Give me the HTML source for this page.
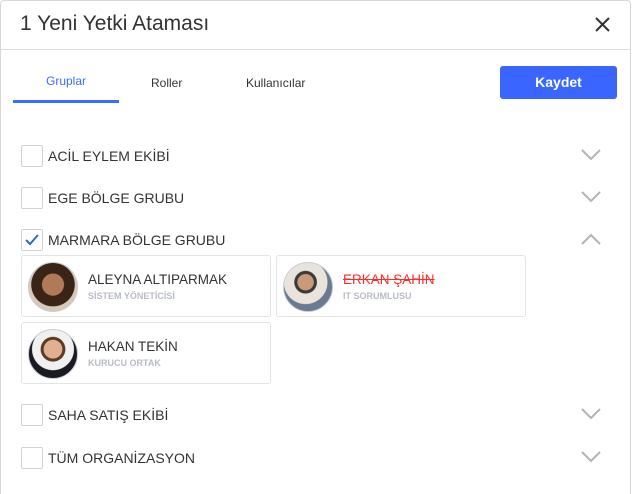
<!DOCTYPE html><html><head><style>
body{margin:0;width:632px;height:493px;background:#fff;font-family:"Liberation Sans",sans-serif;position:relative;overflow:hidden}
.box{position:absolute;left:0;top:0;width:629px;height:493px;border:1px solid #d8d8d8;border-bottom:none;border-radius:4px 4px 0 0}
.a{position:absolute}
.cb{position:absolute;left:21px;width:20px;height:20px;border:1px solid #cfd2d8;border-radius:2px;background:#fff}
.lbl{position:absolute;left:48px;font-size:14px;color:#333}
.chev{position:absolute;left:580px}
.card{position:absolute;width:248px;height:60px;border:1px solid #e2e4e8;border-radius:3px}
.av{position:absolute;left:6px;top:6px;width:48px;height:48px;border-radius:50%;border:1px solid #c8ccd4;overflow:hidden}
.nm{position:absolute;left:66px;top:16px;font-size:13.5px;color:#333}
.rl{position:absolute;left:66px;top:35px;font-size:9px;font-weight:bold;color:#b8bcc6}
</style></head><body>
<div class="box"></div>
<div class="a" style="left:20px;top:12px;font-size:21px;color:#333">1 Yeni Yetki Ataması</div>
<svg class="a" style="left:595px;top:17px" width="15" height="15"><path d="M1 1L14 14M14 1L1 14" stroke="#333" stroke-width="2"/></svg>
<div class="a" style="left:0;top:49px;width:631px;height:1px;background:#dcdcdc"></div>
<div class="a" style="left:46px;top:74px;font-size:12px;color:#3d6bff">Gruplar</div>
<div class="a" style="left:13px;top:100px;width:106px;height:3px;background:#3d6bff"></div>
<div class="a" style="left:151px;top:76px;font-size:12px;color:#333">Roller</div>
<div class="a" style="left:246px;top:76px;font-size:12px;color:#333">Kullanıcılar</div>
<div class="a" style="left:500px;top:66px;width:117px;height:33px;background:#3a66ff;border-radius:3px;color:#fff;font-weight:bold;font-size:14px;text-align:center;line-height:33px">Kaydet</div>

<div class="cb" style="top:145px"></div><div class="lbl" style="top:148px">ACİL EYLEM EKİBİ</div>
<svg class="chev" style="top:148px" width="22" height="14"><path d="M2 2L11 11L20 2" fill="none" stroke="#b0b4bc" stroke-width="2"/></svg>
<div class="cb" style="top:187px"></div><div class="lbl" style="top:190px">EGE BÖLGE GRUBU</div>
<svg class="chev" style="top:190px" width="22" height="14"><path d="M2 2L11 11L20 2" fill="none" stroke="#b0b4bc" stroke-width="2"/></svg>
<div class="cb" style="top:229px"><svg width="20" height="20"><path d="M4 10L8 14L16 5" fill="none" stroke="#2b6cc4" stroke-width="2"/></svg></div><div class="lbl" style="top:232px">MARMARA BÖLGE GRUBU</div>
<svg class="chev" style="top:232px" width="22" height="14"><path d="M2 12L11 3L20 12" fill="none" stroke="#b0b4bc" stroke-width="2"/></svg>

<div class="card" style="left:21px;top:255px"><div class="av" style="background:radial-gradient(circle at 50% 45%,#b07a5a 0 30%,#3a2418 32% 60%,#d8c8b8 62%)"></div><div class="nm">ALEYNA ALTIPARMAK</div><div class="rl">SİSTEM YÖNETİCİSİ</div></div>
<div class="card" style="left:276px;top:255px"><div class="av" style="background:radial-gradient(circle at 45% 40%,#c89a7a 0 20%,#3a3a3a 22% 28%,#e8e4dc 30% 55%,#6a7a90 57%)"></div><div class="nm" style="color:#ff2a2a;text-decoration:line-through">ERKAN ŞAHİN</div><div class="rl">IT SORUMLUSU</div></div>
<div class="card" style="left:21px;top:322px"><div class="av" style="background:radial-gradient(circle at 50% 40%,#e0b090 0 24%,#5a3a24 26% 32%,#f0f0f0 34% 55%,#1a1a22 57%)"></div><div class="nm">HAKAN TEKİN</div><div class="rl">KURUCU ORTAK</div></div>

<div class="cb" style="top:404px"></div><div class="lbl" style="top:407px">SAHA SATIŞ EKİBİ</div>
<svg class="chev" style="top:407px" width="22" height="14"><path d="M2 2L11 11L20 2" fill="none" stroke="#b0b4bc" stroke-width="2"/></svg>
<div class="cb" style="top:447px"></div><div class="lbl" style="top:450px">TÜM ORGANİZASYON</div>
<svg class="chev" style="top:450px" width="22" height="14"><path d="M2 2L11 11L20 2" fill="none" stroke="#b0b4bc" stroke-width="2"/></svg>
</body></html>
